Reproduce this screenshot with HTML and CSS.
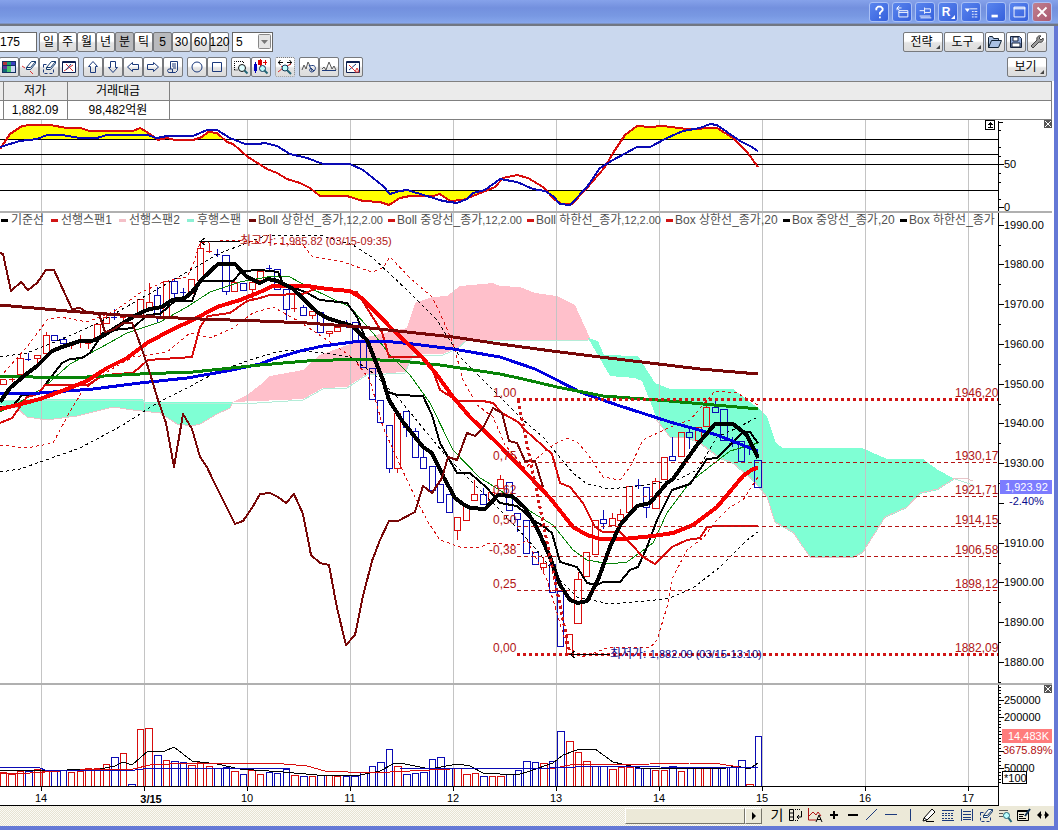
FILE: index.html
```html
<!DOCTYPE html>
<html lang="ko">
<head>
<meta charset="utf-8">
<title>차트</title>
<link rel="stylesheet" href="styles.css">
</head>
<body>
<div class="window">
<header class="titlebar">
  <button class="cap" aria-label="도움말"><svg viewBox="0 0 20 20"><path class="w2" d="M7 8V6l2-2h3l2 2v2l-3 3v2M11 15v2"/></svg></button>
  <button class="cap" aria-label="창 분리"><svg viewBox="0 0 20 20"><path class="w1" d="M6.500 8.500h10v7h-10zM6.500 10.500h10M4.500 8V5.500h5M7 3L4.500 5.500 7 8"/></svg></button>
  <button class="cap" aria-label="고정"><svg viewBox="0 0 20 20"><path class="w1" d="M4 8.500h5M9.500 5v7M10 6.500h6v4h-6M4 14.500h12M5 16.500h12" /></svg></button>
  <button class="cap cap-r">R<svg class="corner" viewBox="0 0 4 4"><path d="M4 0v4H0z"/></svg></button>
  <button class="cap" aria-label="목록"><svg viewBox="0 0 20 20"><path fill="#fff" d="M3 6h6l-3 4z"/><path class="w1" d="M9 6.500h8M11 9.500h2m1 0h3M11 12.500h2m1 0h3M11 15.500h2m1 0h3"/></svg></button>
  <button class="cap cap-gap" aria-label="최소화"><svg viewBox="0 0 20 20"><path class="w3" d="M5 14.500h7"/></svg></button>
  <button class="cap" aria-label="최대화"><svg viewBox="0 0 20 20"><path class="w1" d="M4.500 4.500h12v11h-12zM4 5.500h13M4 6.500h13"/></svg></button>
  <button class="cap cap-close" aria-label="닫기"><svg viewBox="0 0 20 20"><path class="w2" d="M5 5l10 10M15 5L5 15"/></svg></button>
</header>

<div class="tools">
  <div class="row">
    <input class="code" type="text" value="175" aria-label="종목코드">
    <div class="group">
      <button class="btn per">일</button><button class="btn per">주</button><button class="btn per">월</button><button class="btn per">년</button><button class="btn per on">분</button><button class="btn per">틱</button><button class="btn per on">5</button><button class="btn per">30</button><button class="btn per">60</button><button class="btn per">120</button>
    </div>
    <div class="pick">
      <select aria-label="주기"><option>5</option></select>
      <svg viewBox="0 0 13 15"><rect x=".5" y=".5" width="12" height="14" rx="1" fill="#e4e4e4" stroke="#888"/><path d="M3 6h7l-3.500 4z" fill="#777"/></svg>
    </div>
    <div class="right">
      <button class="btn wide">전략<svg class="corner" viewBox="0 0 4 4"><path d="M4 0v4H0z"/></svg></button>
      <button class="btn wide">도구<svg class="corner" viewBox="0 0 4 4"><path d="M4 0v4H0z"/></svg></button>
      <button class="btn sq" aria-label="열기"><svg viewBox="0 0 16 16"><path d="M1.500 13.500v-10l1-1h3l1 2h5v2M1.500 13.500l3-7h10l-3 7z" fill="#a9c0e2" stroke="#123"/></svg></button>
      <button class="btn sq" aria-label="저장"><svg viewBox="0 0 16 16"><path d="M2.500 2.500h9l2 2v9h-11z" fill="#8fa9d8" stroke="#16233d"/><path d="M5 3h5v4H5zM4 9h8v4H4z" fill="#fff" stroke="#16233d"/></svg></button>
      <button class="btn sq" aria-label="설정"><svg viewBox="0 0 16 16"><path d="M2 12l6-6c-1-3 2-5 4-4l-2 2 2 2 2-2c1 3-1 5-4 4l-6 6z" fill="#999" stroke="#444"/></svg></button>
    </div>
  </div>
  <div class="row">
    <div class="group first">
      <button class="btn ic" aria-label="색상"><svg viewBox="0 0 16 16"><path fill="#12305f" d="M1 2h14v12H1z"/><path fill="#b3343c" d="M2 3h4v3H2z"/><path fill="#18a06a" d="M6 3h4v3H6z"/><path fill="#3a3fc0" d="M10 3h4v3h-4z"/><path fill="#62389c" d="M2 7h4v3H2z"/><path fill="#49c26e" d="M6 7h4v6H6z"/><path fill="#cfd8f5" d="M10 7h4v6h-4z"/><path fill="#0f6b75" d="M2 10h4v3H2z"/></svg></button>
      <button class="btn ic" aria-label="지우기"><svg viewBox="0 0 16 16"><path class="er" d="M5.500 8.500l5-6h4l-5 6zM5.500 8.500v2h4l5-6v-2"/><path stroke="#d33" fill="none" d="M1 7l3 2M9 12l3 3"/></svg></button>
      <button class="btn ic" aria-label="영역 지우기"><svg viewBox="0 0 16 16"><path class="nv" stroke-dasharray="3 2" d="M2.500 5.500v9h10v-6M2.500 5.500h4"/><path class="er" d="M5.500 8.500l5-6h4l-5 6zM5.500 8.500v2h4l5-6v-2"/></svg></button>
      <button class="btn ic" aria-label="차트 지우기"><svg viewBox="0 0 16 16"><path class="dk" d="M1.500 2.500h13v11h-13zM2 3.500h12"/><path stroke="#d33" fill="none" d="M3 12l9-6M5 5l7 7"/><path class="nv" d="M5 11l5-6"/></svg></button>
    </div>
    <div class="group">
      <button class="btn ic" aria-label="위로"><svg viewBox="0 0 16 16"><path class="nv" d="M8 2.500l4.500 5h-2v6h-5v-6h-2z"/></svg></button>
      <button class="btn ic" aria-label="아래로"><svg viewBox="0 0 16 16"><path class="nv" d="M8 13.500l4.500-5h-2v-6h-5v6h-2z"/></svg></button>
      <button class="btn ic" aria-label="왼쪽"><svg viewBox="0 0 16 16"><path class="nv" d="M2.500 8l5-4.500v2h6v5h-6v2z"/></svg></button>
      <button class="btn ic" aria-label="오른쪽"><svg viewBox="0 0 16 16"><path class="nv" d="M13.500 8l-5-4.500v2h-6v5h6v2z"/></svg></button>
      <button class="btn ic" aria-label="문서"><svg viewBox="0 0 16 16"><path class="nv" d="M5.500 10V2.500h7v9l-2 2h-7l-1-2 1-1.500h4v3M7 5h4M7 7h4M8 9h3"/></svg></button>
    </div>
    <div class="group">
      <button class="btn ic" aria-label="원"><svg viewBox="0 0 16 16"><circle class="nv" cx="8" cy="8" r="5"/></svg></button>
      <button class="btn ic" aria-label="사각형"><svg viewBox="0 0 16 16"><path class="nv" d="M3.500 3.500h9v9h-9z"/></svg></button>
    </div>
    <div class="group">
      <button class="btn ic" aria-label="영역 확대"><svg viewBox="0 0 16 16"><path class="bk" stroke-dasharray="1 1" d="M1.500 11V2.500h9V5M1.500 11h3"/><circle cx="9" cy="9" r="3.500" fill="#dff" stroke="#111"/><path stroke="#267" stroke-width="2" d="M11.500 11.500l3 3"/></svg></button>
      <button class="btn ic" aria-label="봉 확대"><svg viewBox="0 0 16 16"><path fill="#00b" d="M1 5h3v7H1zM2 3h1v11H2z"/><path fill="#d00" d="M5 1h4v5H5zM7 0h1v8H7zM10 3h4v1h-4zM12 1h1v5h-1z"/><circle cx="9.500" cy="9.500" r="3" fill="#bff" stroke="#135"/><path stroke="#267" stroke-width="2" d="M11.500 11.500l3 3"/></svg></button>
    </div>
    <div class="group">
      <button class="btn ic hot" aria-label="전체 보기"><svg viewBox="0 0 16 16"><path class="bk" d="M1 3.500h5M10 3.500h5M3.500 1l-2 2.500 2 2.500M12.500 1l2 2.500-2 2.500"/><path stroke="#d22" fill="none" d="M1 13l5-4 8-4M4 7l9 7"/><circle cx="8" cy="9" r="3" fill="#bff" stroke="#135"/><path stroke="#267" stroke-width="2" d="M10 11l4 4"/></svg></button>
    </div>
    <div class="group">
      <button class="btn ic" aria-label="파동"><svg viewBox="0 0 16 16"><path class="th" d="M1 11l2-5 2 4 2-7 2 4"/><path class="nv" d="M9 7c5-2 7 2 4 5l-2 1c-3 0-3-3-1-4l3 3M8 6l3 6"/></svg></button>
      <button class="btn ic" aria-label="추세"><svg viewBox="0 0 16 16"><path class="th" d="M1 10l2-2 2 3 3-8 3 7 2-3 2 4"/><path class="nv" d="M1 11.500h14"/></svg></button>
    </div>
    <div class="group">
      <button class="btn ic" aria-label="차트 설정"><svg viewBox="0 0 16 16"><path class="dk" d="M1.500 2.500h13v11h-13zM2 3.500h12"/><path class="nv" d="M4 11l7-6"/><path stroke="#d33" fill="none" d="M4 6l6 6M10 13l2-4 2 4z"/></svg></button>
    </div>
    <div class="right">
      <button class="btn wide">보기<svg class="corner" viewBox="0 0 4 4"><path d="M4 0v4H0z"/></svg></button>
    </div>
  </div>
</div>

<table class="quote">
  <colgroup><col class="c0"><col class="c1"><col class="c2"><col></colgroup>
  <thead><tr><th></th><th>저가</th><th>거래대금</th><th></th></tr></thead>
  <tbody><tr><td></td><td>1,882.09</td><td>98,482억원</td><td></td></tr></tbody>
</table>

<main class="charts">
<svg class="pane" viewBox="0 120 1052 91" role="img" aria-label="보조지표">
  <path class="grid" d="M41.500 120v91M144.500 120v91M247.500 120v91M350.500 120v91M453.500 120v91M556.500 120v91M659.500 120v91M762.500 120v91M865.500 120v91M968.500 120v91"/>
  <g fill="#ff0">
    <path d="M8 139l2-5 12-8 8-1h20l17 3h13l10 3h43l7-3 7 4 10 7zM200 139l8-7 9 1 7 6zM622 139l3-4 12-9 13 1 13-1 24 3h30l17 11z"/>
    <path d="M311 190l9 6h27l16 5 17 1 9 3 11-7 10-2h23l7-2 10 7 13-1 18-8 5-2zM547 190l8 10 7 4h10l14-14z"/>
  </g>
  <path class="axis" d="M0 139.500h998M0 154.500h998M0 164.500h998M0 190.500h998M998.500 121v90M998 122.500h5M998 130.500h3M998 147.500h3M998 156.500h3M998 164.500h6M998 173.500h3M998 182.500h3M998 199.500h3M998 207.500h6"/>
  <polyline class="l2 red" points="0,149 10,134 22,126 30,125 50,125 67,128 80,128 90,131 133,131 140,128 147,132 158,140 167,138 175,140 193,140 202,137 208,132 217,133 227,142 233,144 248,157 267,169 277,173 287,179 300,183 310,188 320,196 347,196 363,201 380,202 389,205 400,198 410,196 433,196 440,194 450,201 463,200 483,192 495,187 503,178 517,175 528,178 543,187 555,200 562,204 572,204 587,188 605,167 613,153 625,135 637,126 650,127 663,126 687,129 717,128 733,138 747,152 758,167"/>
  <polyline class="l2 blue" points="0,147 20,141 37,139 47,135 62,135 80,138 97,138 107,135 147,135 157,138 167,136 193,136 207,130 217,130 230,138 245,144 258,144 265,143 277,146 290,154 307,158 323,164 350,164 363,170 383,186 390,194 400,191 407,190 427,196 443,201 457,203 467,199 473,193 485,190 500,179 517,182 533,189 545,191 553,196 560,204 570,205 587,187 600,168 613,160 637,147 650,147 667,138 683,131 700,128 710,124 717,125 727,132 740,141 750,146 758,151"/>
  <path class="box" d="M985.500 120.500h9v9h-9z"/><path class="axis" d="M990.500 122v6M988 124.500h5M989 123.500h3M988 127.500h5"/>
  <text class="num" x="1004" y="168">50</text><text class="num" x="1004" y="211">0</text>
  <path fill="#555" d="M1044 120h8v8h-8z"/><path class="xw" d="M1045 121l6 6M1051 121l-6 6"/>
</svg>

<svg class="pane" viewBox="0 213 1052 470" role="img" aria-label="가격 차트">
  <path class="cloud-g" d="M0 402l13-2 27-1h103l2 3h88l-3 6-13 6-17 10-8 2-15-2-17-11-27-3-20-3-36 9-30 4-20-3-10-9-17-3z"/>
  <path class="cloud-p" d="M233 402l14-7 13-10 10-9 33-6 17-15 33-12 14-6 40-9 8-25 17-6 15-1 13-10 33-3 7 3 20 1 15 6 22 3 18 9 15 33v2H467l-10 8-14 6h-30l-8 18-38 2-20 13-24 1-20 11-46 2z"/>
  <path class="cloud-g" d="M588 338l10 3 6 14 34 1 17 27 15 6h63l14 11 13 9 7 8 9 26 7 5h79l25 11h36l15 11 17 9-17 11-18 4-13 14-22 10-22 35-10 5h-43l-17-25-18-10-8-25-14-17-20-17-13-5-20-15-13-6h-17l-13-19-7-18-8-20-7-3-25-2z"/>
  <path class="grid" d="M41.500 213v470M144.500 213v470M247.500 213v470M350.500 213v470M453.500 213v470M556.500 213v470M659.500 213v470M762.500 213v470M865.500 213v470M968.500 213v470"/>
  <path class="edge-p" d="M0 406l17 2 10 9 20 3 30-4 36-9 20 3 27 3 17 11 15 2 8-2 17-10 13-6 3-6M655 418l15 19h17l13 6 20 15 13 5 20 17 14 17 8 25 18 10 17 25h43l10-5 22-35 22-10 13-14 18-4 17-11 10 0 8 3"/>
  <path class="edge-g" d="M0 400h143l2 3h112l46-3 20-11 24-1 20-13 38-2 8-18h30l14-6 10-9h121M955 479l12 4 6 2"/>

  <path class="candle red" d="M0 379.500h6v5h-6zM9 379.500h6M12.500 377v5M17.500 358.500h6v16h-6zM20.500 354v4M34.500 355.500h6v3h-6zM37.500 359v4M43.500 335.500h6v18h-6zM46.500 332v3M68 345.500h6M71.500 345v4M77 340.500h6M80.500 335v13M85 343.500h6M88.500 343v6M94.500 324.500h6v15h-6zM103.500 317.500h6v6h-6zM106.500 312v5M120 317.500h6M123.500 316v6M137.500 299.500h6v16h-6zM146.500 302.500h6v8h-6zM149.500 283v19M163.500 281.500h6v35h-6zM188.500 279.500h6v14h-6zM197.500 248.500h6v32h-6zM200.500 242v6M206 251.500h6M209.500 243v10M231.500 282.500h6v9h-6zM234.500 280v2M249.500 282.500h6v7h-6zM252.500 290v10M257.500 271.500h6v9h-6zM291 308.500h6M294.500 295v17M309.500 311.500h6v4h-6zM312.500 316v3M326.500 331.500h6v2h-6zM329.500 334v3M334.500 327.500h6v4h-6zM394.500 413.500h6v55h-6zM397.500 469v4M454.500 517.500h6v13h-6zM457.500 531v9M463.500 505.500h6v15h-6zM471.500 494.500h6v6h-6zM474.500 480v14M488.500 492.500h6v8h-6zM497.500 479.500h6v9h-6zM500.500 475v4M540.500 563.500h6v4h-6zM543.500 557v6M543.500 568v6M566.500 634.500h6v20h-6zM574.500 579.500h7v44h-7zM578.500 572v7M583.500 552.500h6v24h-6zM592.500 520.500h6v34h-6zM609.500 518.500h6v7h-6zM612.500 513v5M617.500 514.500h6v6h-6zM620.500 509v5M626.500 486.500h6v26h-6zM652.500 481.500h7v27h-7zM655.500 478v3M661.500 457.500h6v22h-6zM678.500 432.500h6v24h-6zM695.500 427.500h6v13h-6zM703.500 407.500h6v19h-6zM706.500 400v7"/>
  <path class="candle blue" d="M25 359.500h6M28.500 353v8M51.500 335.500h6v5h-6zM60.500 339.500h6v4h-6zM63.500 337v2M111 317.500h6M114.500 309v11M154.500 295.500h6v22h-6zM157.500 287v8M157.500 317v5M171.500 281.500h6v12h-6zM174.500 278v3M174.500 293v5M180 292.500h6M183.500 288v8M214 254.500h6M217.500 249v8M222.500 255.500h7v36h-7zM226.500 291v4M240.500 283.500h6v7h-6zM266 268.500h6M269.500 265v6M274.500 269.500h6v20h-6zM283.500 289.500h6v20h-6zM286.500 310v10M300.500 307.500h6v8h-6zM303.500 305v2M317.500 312.500h6v20h-6zM343 324.500h6M346.500 320v8M352.500 322.500h6v19h-6zM360.500 342.500h6v25h-6zM369.500 368.500h6v31h-6zM377.500 400.500h6v22h-6zM386.500 425.500h6v43h-6zM389.500 469v4M403.500 411.500h6v16h-6zM406.500 428v9M412.500 431.500h6v26h-6zM415.500 428v3M420.500 457.500h6v11h-6zM423.500 448v9M429.500 466.500h6v24h-6zM437.500 484.500h6v18h-6zM446.500 494.500h6v18h-6zM480.500 494.500h6v10h-6zM483.500 488v6M506.500 482.500h6v28h-6zM514.500 513.500h6v6h-6zM517.500 520v12M523.500 520.500h6v33h-6zM532.500 552.500h6v12h-6zM549.500 564.500h6v28h-6zM557.500 591.500h6v55h-6zM600.500 519.500h6v4h-6zM603.500 510v9M603.500 524v5M635 485.500h6M638.500 479v10M643.500 487.500h6v20h-6zM646.500 508v10M669.500 456.500h6v4h-6zM672.500 437v19M686.500 432.500h6v5h-6zM689.500 427v5M689.500 438v11M712.500 407.500h6v5h-6zM715.500 399v8M720.500 409.500h7v31h-7zM729 443.500h6M732.500 437v10M738.500 441.500h6v20h-6zM749.500 443v12M754.500 460.500h7v27h-7z"/>

  <polyline class="dash blk" points="0,357 27,353 67,337 100,322 147,295 187,272 220,253 247,243 267,235 323,236 353,245 373,258 407,290 437,320 460,357 493,390 523,420 543,437 573,473 587,484 610,489 637,486 677,480 697,470 717,437 737,428 758,417"/>
  <polyline class="dash blk" points="0,472 20,469 43,461 80,448 123,425 157,403 187,388 217,372 250,360 273,353 290,350 323,353 350,357 373,373 400,400 427,433 447,457 503,513 537,550 557,577 577,597 610,604 647,601 670,598 693,588 720,567 747,540 758,532"/>
  <polyline class="dash red" points="0,377 27,347 47,320 60,317 87,322 113,312 140,293 163,282 187,277 194,262 200,243 227,240 303,245 312,256 320,258 343,262 372,272 383,268 390,257 410,278 432,297 440,313 453,343 463,380 477,405 493,417 505,445 525,468 553,445 567,438 577,442 587,453 603,477 620,480 630,467 643,440 670,427 690,420 715,391 737,393 758,405"/>
  <polyline class="dash red" points="0,445 27,448 53,443 67,417 83,390 110,370 133,357 167,352 190,333 210,338 233,328 253,313 273,307 300,322 327,340 353,358 370,380 383,427 400,465 415,497 428,522 440,540 460,547 478,548 490,543 520,545 527,540 547,580 557,613 567,647 583,657 610,647 650,648 657,640 667,607 673,577 687,550 703,538 717,520 730,507 743,500 758,477"/>
  <polyline class="l1 green" points="0,412 20,402 43,388 70,364 100,348 127,333 160,322 187,307 210,292 240,282 273,276 290,277 310,288 350,307 373,333 390,355 410,375 430,403 453,450 480,478 487,482 507,495 533,513 553,525 573,550 587,560 610,564 627,562 653,543 667,513 690,482 730,451 758,443"/>
  <polyline class="l2 blk" points="0,407 12,407 22,395 38,394 62,363 70,359 82,358 90,353 103,333 113,330 133,328 147,315 160,314 175,301 192,301 200,281 233,281 242,271 260,270 278,272 283,283 307,293 320,300 347,303 357,317 365,337 388,392 397,395 423,396 432,415 440,443 457,473 470,473 487,488 500,503 517,506 533,520 543,526 552,533 560,562 577,567 587,583 597,585 603,582 620,582 630,570 638,567 647,547 657,520 672,490 690,484 707,459 717,458 733,442 743,432 750,432 758,443"/>
  <polyline class="l2 red" points="0,423 12,418 27,397 38,394 45,385 88,385 100,377 115,374 133,373 148,360 192,357 200,327 208,316 230,313 247,301 260,298 270,295 303,294 317,288 357,292 365,305 382,332 389,357 422,357 432,368 440,390 458,401 483,401 493,403 502,413 518,422 525,430 552,454 560,483 570,487 583,503 595,527 603,532 620,532 643,557 655,564 672,547 687,540 700,538 707,527 717,526 758,526"/>
  <polyline class="l3 blue2" points="0,393 40,393 93,389 140,383 187,378 227,371 260,364 273,359 300,351 323,346 353,342 383,341 413,344 453,349 500,357 535,369 557,380 580,392 620,406 670,422 717,435 758,451"/>
  <polyline class="l3 green" points="0,376 33,377 87,377 140,374 193,372 260,365 307,361 360,359 400,361 440,365 500,374 523,379 557,387 603,396 657,400 703,404 737,407 758,409"/>
  <polyline class="l4 bright" points="0,409 13,406 40,399 67,389 87,381 107,368 127,358 147,343 173,329 193,320 217,307 240,300 260,292 273,286 307,286 327,289 350,291 363,299 393,330 423,358 437,375 453,397 470,417 497,443 530,477 550,498 573,527 587,535 600,539 623,539 653,536 673,533 693,525 717,507 743,476 753,469 758,468"/>
  <polyline class="l4 blk" points="0,402 10,388 25,375 37,366 52,351 62,347 80,341 92,341 103,336 123,323 133,317 142,312 150,309 162,307 172,300 185,298 192,292 203,278 218,264 235,264 247,277 260,283 268,279 278,281 293,289 317,312 327,318 352,326 367,340 373,355 383,380 389,400 403,422 423,447 432,453 444,478 449,487 455,498 463,504 470,508 485,509 498,495 512,496 525,508 537,528 550,557 560,585 570,600 578,603 587,601 598,580 610,547 620,525 637,506 650,503 667,483 673,479 697,445 715,424 733,424 747,435 758,458"/>
  <polyline class="l3 maroon" points="0,305 67,311 133,316 200,319 260,321 307,323 360,327 407,332 453,337 500,344 552,351 600,357 650,363 700,369 758,374"/>
  <polyline class="l2 maroon" points="0,253 3,254 11,291 21,282 28,290 37,283 46,270 54,270 72,309 80,308 88,313 99,314 105,332 113,330 123,323 132,323 138,338 148,367 158,400 166,423 174,467 183,414 192,429 200,457 207,467 213,480 235,524 243,521 252,508 260,494 270,493 278,497 286,503 294,494 303,514 311,555 320,563 329,565 337,608 346,645 355,635 363,596 372,561 380,540 389,521 398,521 415,512 423,486 432,493 442,478 448,457 457,460 467,433 475,436 483,428 493,408 502,413 509,441 517,443 525,461 535,461 543,487"/>

  <path class="fib" d="M517 399.500h481M517 654.500h481M518 400l52 254"/>
  <path class="fibt" d="M517 462.500h481M517 496.500h481M517 526.500h481M517 556.500h481M517 590.500h481"/>
  <g class="fl"><text x="493" y="397">1,00</text><text x="493" y="460">0,75</text><text x="493" y="494">0,62</text><text x="493" y="524">0,50</text><text x="489" y="554">-0,38</text><text x="493" y="588">0,25</text><text x="493" y="652">0,00</text>
  <text x="955" y="397">1946,20</text><text x="955" y="460">1930,17</text><text x="955" y="494">1921,71</text><text x="955" y="524">1914,15</text><text x="955" y="554">1906,58</text><text x="955" y="588">1898,12</text><text x="955" y="652">1882,09</text></g>
  <path class="axis" d="M200 241.500h40M205 238l-5 3.500 5 3.500M570 654.500h40M575 651l-5 3.500 5 3.500"/>
  <text class="hi" x="240" y="245"><tspan class="ko">최고가: </tspan>1,985.82 (03/15-09:35)</text>
  <text class="lo" x="610" y="658"><tspan class="ko">최저가: </tspan>1,882.09 (03/15-13:10)</text>

  <g class="legend">
    <path class="k-blk" d="M1 220.500h7M783 220.500h7M900 220.500h7"/><path class="k-red" d="M51 220.500h7M388 220.500h7M527 220.500h7M666 220.500h7"/><path class="k-pink" d="M119 220.500h7"/><path class="k-aqua" d="M187 220.500h7"/><path class="k-mar" d="M249 220.500h7"/>
    <text x="11" y="224">기준선</text><text x="61" y="224">선행스팬1</text><text x="129" y="224">선행스팬2</text><text x="197" y="224">후행스팬</text><text x="258" y="224">Boll 상한선_종가<tspan class="sm">,12,2.00</tspan></text><text x="397" y="224">Boll 중앙선_종가<tspan class="sm">,12,2.00</tspan></text><text x="536" y="224">Boll 하한선_종가<tspan class="sm">,12,2.00</tspan></text><text x="675" y="224">Box 상한선_종가,20</text><text x="792" y="224">Box 중앙선_종가,20</text><text x="909" y="224">Box 하한선_종가</text>
  </g>
  <path class="axis" d="M998.500 213v470M998 225.500h6M998 264.500h6M998 304.500h6M998 344.500h6M998 384.500h6M998 423.500h6M998 463.500h6M998 503.500h6M998 543.500h6M998 582.500h6M998 622.500h6M998 662.500h6M998 245.500h3M998 284.500h3M998 324.500h3M998 364.500h3M998 404.500h3M998 443.500h3M998 483.500h3M998 523.500h3M998 563.500h3M998 602.500h3M998 642.500h3M998 682.500h3"/>
  <g class="num"><text x="1004" y="229">1990.00</text><text x="1004" y="268">1980.00</text><text x="1004" y="308">1970.00</text><text x="1004" y="348">1960.00</text><text x="1004" y="388">1950.00</text><text x="1004" y="427">1940.00</text><text x="1004" y="467">1930.00</text><text x="1004" y="547">1910.00</text><text x="1004" y="586">1900.00</text><text x="1004" y="626">1890.00</text><text x="1004" y="666">1880.00</text></g>
  <path fill="#7c7cff" d="M1000 480h52v14h-52z"/><text class="num" fill="#fff" x="1005" y="491">1,923.92</text><text class="num" fill="#0a0a8c" x="1009" y="505">-2.40%</text>
</svg>

<svg class="pane" viewBox="0 685 1052 121" role="img" aria-label="거래량">
  <path class="grid" d="M41.500 685v101M144.500 685v101M247.500 685v101M350.500 685v101M453.500 685v101M556.500 685v101M659.500 685v101M762.500 685v101M865.500 685v101M968.500 685v101"/>
  <path class="candle red" d="M.5 786v-14h6v14M8.500 786v-12h7v12M17.500 786v-15h6v15M34.500 786v-17h6v17M42.500 786v-15h7v15M68.500 786v-14h6v14M77.500 786v-15h6v15M85.500 786v-18h6v18M94.500 786v-18h6v18M103.500 786v-22h6v22M120.500 786v-33h6v33M137.500 786v-57h6v57M145.500 786v-58h7v58M163.500 786v-26h6v26M188.500 786v-21h7v21M197.500 786v-24h6v24M206.500 786v-20h6v20M231.500 786v-15h7v15M248.500 786v-16h7v16M257.500 786v-12h6v12M291.500 786v-11h7v11M309.500 786v-10h6v10M326.500 786v-11h6v11M334.500 786v-10h6v10M394.500 786v-20h7v20M454.500 786v-18h7v18M463.500 786v-12h7v12M472.500 786v-13h6v13M489.500 786v-10h6v10M497.500 786v-10h7v10M540.500 786v-23h7v23M566.500 786v-45h7v45M575.500 786v-34h6v34M583.500 786v-25h7v25M609.500 786v-17h7v17M618.500 786v-19h6v19M626.500 786v-19h7v19M652.500 786v-16h6v16M661.500 786v-16h6v16M678.500 786v-15h6v15M695.500 786v-18h6v18M703.500 786v-18h7v18M746.500 786v-2h7v2"/>
  <path class="candle blue" d="M25.500 786v-15h7v15M51.500 786v-15h6v15M60.500 786v-16h6v16M111.500 786v-29h7v29M128.500 786v-2h7v2M154.500 786v-31h7v31M171.500 786v-25h7v25M180.500 786v-24h6v24M214.500 786v-18h7v18M223.500 786v-19h6v19M240.500 786v-12h6v12M266.500 786v-14h6v14M274.500 786v-13h6v13M283.500 786v-17h6v17M300.500 786v-10h7v10M317.500 786v-11h7v11M343.500 786v-10h6v10M351.500 786v-10h7v10M360.500 786v-14h7v14M369.500 786v-20h6v20M377.500 786v-24h7v24M386.500 786v-37h6v37M403.500 786v-12h7v12M412.500 786v-13h6v13M420.500 786v-14h7v14M429.500 786v-27h6v27M437.500 786v-29h7v29M446.500 786v-18h6v18M480.500 786v-10h7v10M506.500 786v-12h7v12M515.500 786v-16h6v16M523.500 786v-25h7v25M532.500 786v-24h6v24M549.500 786v-25h6v25M557.500 786v-55h7v55M592.500 786v-20h6v20M600.500 786v-20h7v20M635.500 786v-18h6v18M643.500 786v-18h7v18M669.500 786v-20h7v20M687.500 786v-18h6v18M712.500 786v-18h6v18M720.500 786v-19h7v19M729.500 786v-19h7v19M738.500 786v-26h7v26M755.500 786v-50h6v50"/>
  <polyline class="l1 blk" points="0,770 67,770 100,769 115,766 123,762 132,765 148,751 165,751 174,747 192,761 217,764 240,769 283,772 317,775 360,775 380,771 393,764 400,763 430,769 457,764 470,766 483,773 517,775 530,771 553,763 563,755 577,750 595,749 613,762 640,768 720,769 737,766 749,769 758,763"/>
  <polyline class="l1 red" points="0,774 30,773 60,771 100,769 133,769 150,765 190,763 273,763 307,766 325,771 370,773 410,771 450,769 555,768 570,765 650,764 690,763 720,764 745,768"/>
  <polyline class="l1 blue" points="0,767 40,768 45,770 135,770 152,768 240,768 290,769 400,769 550,768 600,766 660,767 758,768"/>
  <path class="axis" d="M0 786.500h998M0 805.500h999M998.500 685v121M41.500 786v5M144.500 786v5M247.500 786v5M350.500 786v5M453.500 786v5M556.500 786v5M659.500 786v5M762.500 786v5M865.500 786v5M968.500 786v5M998 700.500h6M998 717.500h6M998 734.500h6M998 751.500h6M998 768.500h6M998 687.500h3M998 690.500h3M998 693.500h3M998 697.500h3M998 704.500h3M998 707.500h3M998 710.500h3M998 714.500h3M998 721.500h3M998 724.500h3M998 727.500h3M998 731.500h3M998 738.500h3M998 741.500h3M998 744.500h3M998 748.500h3M998 755.500h3M998 758.500h3M998 761.500h3M998 765.500h3M998 772.500h3M998 775.500h3M998 779.500h3M998 782.500h3"/>
  <g class="num mid"><text x="41" y="802">14</text><text class="strong" x="151" y="803">3/15</text><text x="247" y="802">10</text><text x="350" y="802">11</text><text x="453" y="802">12</text><text x="556" y="802">13</text><text x="659" y="802">14</text><text x="762" y="802">15</text><text x="865" y="802">16</text><text x="968" y="802">17</text></g>
  <g class="num"><text x="1004" y="704">250000</text><text x="1004" y="721">200000</text><text x="1004" y="772">50000</text></g>
  <path fill="#ff7c7c" d="M1002 729h50v14h-50z"/><text class="num" fill="#fff" x="1008" y="740">14,483K</text><text class="num" fill="#b01010" x="1003" y="754">3675.89%</text>
  <path class="box" d="M1002.500 771.500h24v12h-24z"/><text class="num" x="1004" y="782">*100</text>
  <path fill="#555" d="M1044 685h8v8h-8z"/><path class="xw" d="M1045 686l6 6M1051 686l-6 6"/>
</svg>
</main>

<footer class="bottom">
  <div class="track"><div class="thumb"></div><button class="arrow" aria-label="오른쪽으로 스크롤"><svg viewBox="0 0 8 8"><path d="M2 0l4 4-4 4z"/></svg></button></div>
  <div class="draw">
    <button class="tool t-text">기</button>
    <button class="tool" aria-label="차트 이동"><svg viewBox="0 0 16 16"><path class="bk" d="M1.500 2.500h4v11h-4zM2 6h3M2 10h3"/><path class="bk" stroke-dasharray="1 1" d="M7 2.500h6M7 13.500h3"/><path class="bk" d="M13.500 4v6h-4M11 8l-2 2 2 2"/></svg></button>
    <button class="tool" aria-label="추세 분석"><svg viewBox="0 0 16 16"><path stroke="#b01414" fill="none" d="M1.500 1v12H9M1 10l5-5 3 3 2-3 3 4"/><path class="bk" d="M9 15l3-7 3 7M10 12.500h4"/></svg></button>
    <button class="tool" aria-label="십자"><svg viewBox="0 0 16 16"><path stroke="#000" stroke-width="2" d="M4 8h8M8 4v8"/></svg></button>
    <button class="tool" aria-label="굵은 선"><svg viewBox="0 0 16 16"><path stroke="#000" stroke-width="2" d="M3 8h10"/></svg></button>
    <button class="tool" aria-label="사선"><svg viewBox="0 0 16 16"><path class="nv" d="M2 13L13 2"/></svg></button>
    <button class="tool" aria-label="수평선"><svg viewBox="0 0 16 16"><path class="nv" d="M2 7.500h12"/></svg></button>
    <button class="tool" aria-label="수직선"><svg viewBox="0 0 16 16"><path class="nv" d="M8.500 2v12"/></svg></button>
    <button class="tool" aria-label="연필"><svg viewBox="0 0 16 16"><path d="M3 11l8-9 3 3-8 8-4 1z" fill="#fff" stroke="#000"/><path class="bk" d="M5 14.500h8M3 11l3 2"/></svg></button>
    <button class="tool" aria-label="피보나치"><svg viewBox="0 0 16 16"><path class="nv" d="M2 3.500h12M2 13.500h12"/><path class="nv" stroke-dasharray="2 1" d="M2 6.500h12M2 8.500h12M2 11.500h12"/></svg></button>
    <button class="tool" aria-label="등분선"><svg viewBox="0 0 16 16"><path class="nv" d="M2.500 2v12M13.500 2v12M4 4.500h8M4 7.500h8M4 10.500h8M4 12.500h8"/></svg></button>
    <button class="tool" aria-label="영역 지우개"><svg viewBox="0 0 16 16"><path class="nv" stroke-dasharray="3 2" d="M2.500 5.500v9h10v-6M2.500 5.500h4"/><path class="er" d="M5.500 8.500l5-6h4l-5 6zM5.500 8.500v2h4l5-6v-2"/></svg></button>
    <button class="tool" aria-label="찾기"><svg viewBox="0 0 16 16"><path class="th" d="M2 3.500h9M2 6.500h4M2 9.500h4"/><circle cx="9.500" cy="8.500" r="3" fill="#bff" stroke="#267"/><path stroke="#267" stroke-width="2" d="M11.500 11l3 4"/></svg></button>
    <button class="tool" aria-label="메모"><svg viewBox="0 0 16 16"><path class="bk" d="M1.500 3.500h11v10h-11zM2 4.500h10M3 7.500h5M3 9.500h4M3 11.500h7"/><path stroke="#135" stroke-width="2" d="M9 9l5-7"/></svg></button>
    <button class="tool" aria-label="좌우 이동"><svg viewBox="0 0 16 16"><path d="M6 4v8L2 8zM10 4v8l4-4z"/><path class="bk" d="M5 8h2M9 8h2"/></svg></button>
  </div>
</footer>
</div>
</body>
</html>
```
FILE: styles.css
```css
* { box-sizing: border-box; }
body {
  margin: 0;
  font: 12px/16px "Liberation Sans", "Noto Sans CJK KR", sans-serif;
  color: #000;
  background: #cad8ee;
}
button, input, select { font: inherit; color: inherit; margin: 0; padding: 0; }
.window {
  min-height: 100vh;
  display: flex;
  flex-direction: column;
  border: solid #6478d6;
  border-width: 0 4px 4px 0;
  background: #fff;
}
.titlebar {
  height: 26px;
  margin-right: -4px;
  display: flex;
  justify-content: flex-end;
  align-items: flex-start;
  gap: 3px;
  padding: 2px 6px 0 0;
  background: linear-gradient(#86a2ea, #7390de 30%, #7898e2 60%, #86a6ec 88%, #717783 94%);
}
.cap {
  position: relative;
  width: 20px;
  height: 20px;
  border: 1px solid #a9c0f6;
  border-radius: 3px;
  background: linear-gradient(135deg, #5a85ee, #3560dc);
  color: #fff;
}
.cap svg { display: block; width: 18px; height: 18px; }
.cap-r { font-weight: bold; line-height: 16px; padding-right: 4px; }
.cap .corner { fill: #fff; }
.cap-gap { margin-left: 2px; }
.cap-close { background: linear-gradient(135deg, #c08090, #ab5a70); }
.w1, .w2, .w3 { fill: none; stroke: #fff; }
.w2 { stroke-width: 2; }
.w3 { stroke-width: 3; }

.tools {
  display: flex;
  flex-direction: column;
  gap: 5px;
  padding: 6px 7px 4px 0;
  background: #cad8ee;
}
.row { display: flex; align-items: center; gap: 4px; height: 20px; }
.group { display: flex; }
.first { margin-left: -1px; }
.right { display: flex; gap: 1px; margin-left: auto; }
.code {
  width: 37px;
  height: 20px;
  margin-right: -2px;
  border: 1px solid #6b6b6b;
  border-left: 0;
  background: #fff;
}
.btn {
  position: relative;
  height: 20px;
  display: flex;
  align-items: center;
  justify-content: center;
  border: 1px solid #77797d;
  border-radius: 2px;
  background: linear-gradient(#fff 45%, #e4e4e4 55%, #dcdcdc);
  white-space: nowrap;
}
.per { width: 19px; }
.on { background: #b9babd; }
.wide { width: 40px; padding-right: 3px; }
.sq, .ic { width: 20px; }
.btn svg:not(.corner) { width: 16px; height: 16px; flex: none; }
.hot { border-style: dotted; }
.corner { position: absolute; right: 2px; bottom: 2px; width: 4px; height: 4px; fill: #444; }
.cap svg.corner { width: 4px; height: 4px; }
.pick { position: relative; width: 41px; height: 20px; margin-left: -1px; }
.pick select {
  width: 100%;
  height: 20px;
  padding-left: 3px;
  appearance: none;
  border: 1px solid #666;
  border-radius: 0;
  background: #fff;
}
.pick svg { position: absolute; right: 2px; top: 2px; width: 13px; height: 15px; pointer-events: none; }
.nv { fill: none; stroke: #1c3a7c; }
.dk { fill: #fff; stroke: #0c1e50; }
.bk { fill: none; stroke: #000; }
.th { fill: none; stroke: #555; }
.er { fill: #fff; stroke: #143a6c; }

.quote {
  width: calc(100% - 2px);
  table-layout: fixed;
  border-collapse: collapse;
  border-bottom: 1px solid #808080;
}
.quote th, .quote td {
  height: 19px;
  padding: 0;
  line-height: 18px;
  border: 1px solid #808080;
  border-left: 0;
  font-weight: normal;
  text-align: center;
}
.quote th { background: #ebebeb; }
.c0 { width: 3px; }
.c1 { width: 64px; }
.c2 { width: 102px; }

.charts { padding-right: 2px; display: flex; flex-direction: column; }
.pane { display: block; width: 100%; height: auto; overflow: visible; shape-rendering: crispEdges; }
.pane + .pane { border-top: 2px solid #b0b0b0; }
.pane text { font-size: 12px; }
.grid { stroke: #c4c4c4; fill: none; }
.axis { stroke: #000; fill: none; }
.box { stroke: #000; fill: #fff; }
.xw { stroke: #fff; fill: none; }
.pane .num, .pane .num text { font-size: 11px; }
.mid { text-anchor: middle; }
.strong { font-weight: bold; }
.l1, .l2, .l3, .l4, .dash, .candle { fill: none; stroke-linejoin: round; }
.l1, .dash, .candle { stroke-width: 1; }
.l2 { stroke-width: 2; }
.l3 { stroke-width: 3; }
.l4 { stroke-width: 4; }
.dash { stroke-dasharray: 3 3; }
.red { stroke: #d80c0c; }
.bright { stroke: #f80000; }
.blue { stroke: #0a0ab4; }
.blue2 { stroke: #0000e0; }
.green { stroke: #088408; }
.maroon { stroke: #780808; }
.blk { stroke: #000; }
.cloud-g { fill: #7fffd4; }
.cloud-p { fill: #ffc0cb; }
.edge-p { fill: none; stroke: #e8c4c8; }
.edge-g { fill: none; stroke: #b4ecd8; }
.fib { fill: none; stroke: #d01414; stroke-width: 3; stroke-dasharray: 3 3; }
.fibt { fill: none; stroke: #b41414; stroke-dasharray: 4 3; }
.fl { fill: #b01414; }
.pane .hi, .pane .lo, .sm { font-size: 11px; }
.ko { font-size: 12px; }
.hi { fill: #b01414; }
.lo { fill: #0a0a8c; }
.legend text { fill: #505050; }
.legend path { stroke-width: 3; }
.k-blk { stroke: #000; }
.k-red { stroke: #d01414; }
.k-pink { stroke: #f4c0c8; }
.k-aqua { stroke: #8cf0d4; }
.k-mar { stroke: #700808; }

.bottom {
  flex: 1;
  display: flex;
  min-height: 20px;
  background: #ece9d8;
}
.track {
  flex: 1;
  display: flex;
  justify-content: flex-end;
  padding: 2px 0;
  background: repeating-conic-gradient(#e6e2d2 0 25%, #fbfaf5 0 50%) 0 0 / 2px 2px;
}
.thumb { width: 120px; }
.thumb, .arrow {
  background: #ece9d8;
  border: 1px solid;
  border-color: #fff #77756a #77756a #fff;
}
.arrow { width: 17px; display: flex; align-items: center; justify-content: center; }
.arrow svg { width: 8px; height: 8px; }
.draw {
  flex: 0 0 292px;
  display: flex;
  justify-content: space-between;
  align-items: center;
  padding: 0 3px 2px 7px;
}
.tool { width: 16px; height: 16px; border: 0; background: none; line-height: 16px; }
.tool svg { display: block; width: 16px; height: 16px; }
.t-text { font-size: 14px; }
```
